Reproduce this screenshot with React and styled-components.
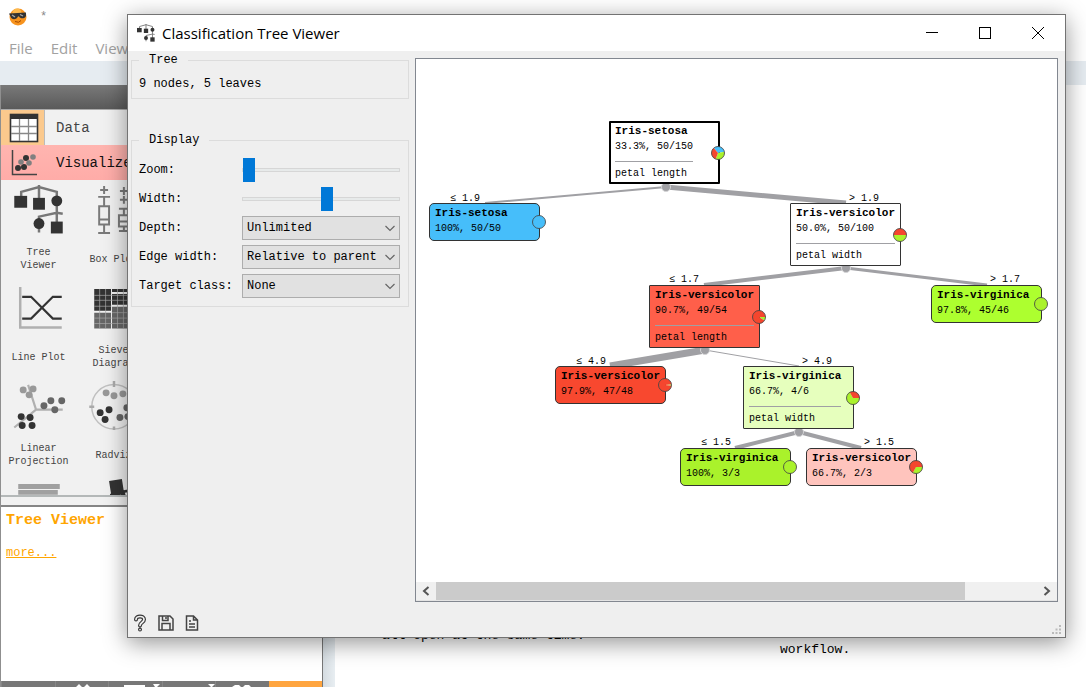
import React from 'react'
import styled, { createGlobalStyle, css } from 'styled-components'

const theme = {
  mono: '"Liberation Mono", "DejaVu Sans Mono", monospace',
  sans: '"Open Sans", "Noto Sans", sans-serif',
  panel: '#efefef',
  frame: '#828790',
  edge: '#a0a0a4',
  blue: '#46befa',
  red: '#f5462e',
  green: '#aaf22b',
}

const GlobalStyle = createGlobalStyle`
  * { box-sizing: border-box; }
  body {
    margin: 0;
    overflow: hidden;
    background: #fff;
    color: #000;
    font-family: ${theme.mono};
    font-size: 12px;
    line-height: 16px;
  }
  button {
    padding: 0;
    border: none;
    background: none;
    font: inherit;
    color: inherit;
  }
  svg { display: block; }
`

/* main window */

const Desktop = styled.div`
  position: relative;
  display: flex;
  flex-direction: column;
  height: 100vh;
  overflow: hidden;
`

const MainTitle = styled.header`
  display: flex;
  align-items: center;
  gap: 12px;
  height: 34px;
  padding-left: 8px;
  color: #888;
`

const MenuBar = styled.nav`
  display: flex;
  gap: 18px;
  height: 27px;
  padding-left: 9px;
  font-family: ${theme.sans};
  font-size: 15px;
  line-height: 28px;
  color: #a2a2a2;
`

const ToolStrip = styled.div`
  height: 24px;
  background: #e6ecf1;
`

const Workspace = styled.div`
  display: flex;
  flex: 1;
  min-height: 0;
`

const Dock = styled.aside`
  display: flex;
  flex: none;
  flex-direction: column;
  width: 323px;
  border-left: 1px solid #8f8f8f;
  border-right: 1px solid #777;
`

const DockHeader = styled.div`
  flex: none;
  height: 25px;
  background: linear-gradient(#797979, #5a5a5a);
  border-bottom: 1px solid #aaa;
`

const Category = styled.button`
  display: flex;
  flex: none;
  align-items: center;
  height: 35px;
  font-size: 14px;
  text-align: left;
  color: ${props => props.$active ? '#111' : '#444'};
  background: ${props => props.$active ? 'linear-gradient(#ffb5b0, #ffaca8)' : '#f1f1f1'};
`

const CategoryIcon = styled.span`
  display: flex;
  align-items: center;
  width: 44px;
  height: 35px;
  margin-right: 11px;
  padding-left: 8px;
  ${props => props.$selected && css`background: #fbc98d;`}
  ${props => props.$selected && css`border-right: 1px solid #bbb;`}
`

const Palette = styled.div`
  display: grid;
  flex: 1;
  grid-template-columns: 75px 75px;
  grid-auto-rows: 98px;
  min-height: 0;
  overflow: hidden;
  background: #f1f1f1;
  border-bottom: 2px solid #b4b8b8;
`

const PaletteItem = styled.button`
  display: flex;
  flex-direction: column;
  align-items: center;
  padding-top: 5px;
  font-size: 10px;
  line-height: 13px;
  color: #444;
`

const PaletteLabel = styled.span`
  display: flex;
  align-items: center;
  height: 38px;
  margin-top: 6px;
`

const Info = styled.section`
  flex: none;
  height: 184px;
  border-top: 8px solid #f1f1f1;
`

const InfoBody = styled.div`
  height: 100%;
  padding: 4px 5px 0;
  border-top: 2px solid #858585;
`

const InfoTitle = styled.h2`
  margin: 0;
  font-size: 15px;
  line-height: 20px;
  color: #ffa500;
`

const InfoLink = styled.a`
  display: inline-block;
  margin-top: 14px;
  color: #ffa500;
`

const ActionBar = styled.div`
  display: grid;
  flex: none;
  grid-template-columns: repeat(6, 1fr);
  height: 6px;
  background: #777;
`

const Action = styled.button`
  display: flex;
  justify-content: center;
  overflow: hidden;
  background: ${props => props.$active ? '#ffa53f' : '#777'};
  border-left: 1px solid ${props => props.$active ? '#ffa53f' : '#868686'};
`

const Splitter = styled.div`
  flex: none;
  width: 12px;
  background: linear-gradient(90deg, #d5dce1, #e8eef2);
`

const Document = styled.main`
  display: flex;
  flex: 1;
  align-items: flex-end;
  min-width: 0;
  padding-left: 47px;
  font-size: 13px;
  line-height: 18px;
`

const Paragraph = styled.p`
  flex: none;
  width: 398px;
  margin: 0;
  padding-bottom: ${props => props.$bottom}px;

  &:last-child { width: auto; }
`

/* dialog */

const Dialog = styled.div`
  position: absolute;
  top: 14px;
  right: 20px;
  bottom: 49px;
  left: 127px;
  display: flex;
  flex-direction: column;
  background: ${theme.panel};
  border: 1px solid #737373;
  box-shadow: 0 5px 22px rgba(0, 0, 0, 0.42);
`

const TitleBar = styled.header`
  display: flex;
  flex: none;
  align-items: center;
  height: 36px;
  padding: 0 1px 0 9px;
  background: #fff;
`

const DialogTitle = styled.h1`
  flex: 1;
  margin: 0 0 0 7px;
  font-family: ${theme.sans};
  font-size: 15px;
  font-weight: 400;
  line-height: 20px;
`

const WindowButton = styled.button`
  display: flex;
  align-items: center;
  justify-content: center;
  width: 53px;
  height: 36px;
`

const DialogBody = styled.div`
  display: flex;
  flex: 1;
  min-height: 0;
`

const Controls = styled.div`
  display: flex;
  flex: none;
  flex-direction: column;
  gap: 33px;
  width: 281px;
  padding: 1px 0 0 3px;
`

const Group = styled.fieldset`
  min-width: 0;
  margin: 0;
  padding: 8px 8px 6px 7px;
  border: 1px solid #dcdcdc;
`

const Legend = styled.legend`
  padding: 0 10px;
`

const Form = styled.div`
  display: grid;
  grid-template-columns: 103px 1fr;
  grid-auto-rows: 24px;
  row-gap: 5px;
  align-items: center;
  padding: 2px 0;
`

const Slider = styled.input`
  width: 100%;
  height: 24px;
  margin: 0;
  appearance: none;
  background: none;

  &::-webkit-slider-runnable-track {
    height: 4px;
    background: #e7eaea;
    border: 1px solid #d6d6d6;
  }
  &::-webkit-slider-thumb {
    appearance: none;
    width: 12px;
    height: 24px;
    margin-top: -11px;
    background: #0078d7;
  }
`

const SelectBox = styled.div`
  position: relative;

  svg {
    position: absolute;
    top: 9px;
    right: 5px;
    pointer-events: none;
  }
`

const Select = styled.select`
  width: 100%;
  height: 24px;
  padding: 0 0 0 4px;
  appearance: none;
  background: #e1e1e1;
  border: 1px solid #adadad;
  border-radius: 0;
  font: inherit;
  color: inherit;
`

const View = styled.div`
  display: flex;
  flex: 1;
  flex-direction: column;
  min-width: 0;
  margin: 7px 7px 0 6px;
  background: #fff;
  border: 1px solid ${theme.frame};
`

const Canvas = styled.div`
  position: relative;
  flex: 1;
  overflow: hidden;
`

const ScrollBar = styled.div`
  display: flex;
  height: 19px;
  background: #f0f0f0;
  border-bottom: 1px solid #e4e4e4;
`

const ScrollButton = styled.button`
  display: flex;
  align-items: center;
  justify-content: center;
  width: 20px;
`

const ScrollTrack = styled.div`
  flex: 1;
`

const ScrollThumb = styled.div`
  width: 88%;
  height: 18px;
  background: #cbcbcb;
`

const Footer = styled.footer`
  display: flex;
  flex: none;
  gap: 8px;
  align-items: center;
  height: 35px;
  padding: 6px 3px 0;
`

const IconButton = styled.button`
  display: flex;
  align-items: center;
  justify-content: center;
  width: 18px;
  height: 18px;
`

const Grip = styled.svg`
  align-self: flex-end;
  margin: 0 0 2px auto;
`

/* tree */

const NodeBox = styled.div`
  position: absolute;
  width: 111px;
  height: ${props => props.$leaf ? 38 : 63}px;
  padding: ${props => props.$root ? 1 : 2}px ${props => props.$root ? 4 : 5}px;
  background: ${props => props.$fill};
  border: ${props => props.$root ? '2px solid #000' : '1px solid #333'};
  border-radius: ${props => props.$leaf ? 5 : 1}px;
  font-size: 10px;
  line-height: 15px;
  white-space: nowrap;
`

const NodeText = styled.div`
  width: max-content;
`

const NodeTitle = styled.strong`
  display: block;
  font-size: 11px;
  line-height: 15px;
`

const NodeSplit = styled.div`
  margin-top: 7px;
  padding-top: 4px;
  border-top: 1px solid ${theme.edge};
  line-height: 16px;
`

const PieSvg = styled.svg`
  position: absolute;
  top: 50%;
  right: -8px;
  margin-top: -8px;
`

const EdgeLayer = styled.svg`
  position: absolute;
  top: 0;
  left: 0;
`

const EdgeLabel = styled.span`
  position: absolute;
  font-size: 10px;
  line-height: 12px;
  white-space: pre;
`

const nodes = [
  { x: 193, y: 62, name: 'Iris-setosa', stats: '33.3%, 50/150', split: 'petal length', fill: '#fff', root: true, pie: [[theme.blue, 1], [theme.green, 1], [theme.red, 1]], start: -40 },
  { x: 13, y: 144, name: 'Iris-setosa', stats: '100%, 50/50', fill: theme.blue, pie: [[theme.blue, 1]] },
  { x: 374, y: 144, name: 'Iris-versicolor', stats: '50.0%, 50/100', split: 'petal width', fill: '#fff', pie: [[theme.green, 1], [theme.red, 1]], start: 90 },
  { x: 233, y: 226, name: 'Iris-versicolor', stats: '90.7%, 49/54', split: 'petal length', fill: '#ff5f4a', pie: [[theme.green, 5], [theme.red, 49]], start: 90 },
  { x: 515, y: 226, name: 'Iris-virginica', stats: '97.8%, 45/46', fill: '#adff2f', pie: [[theme.green, 1]] },
  { x: 139, y: 307, name: 'Iris-versicolor', stats: '97.9%, 47/48', fill: '#f8482f', pie: [[theme.green, 1], [theme.red, 30]], start: 84 },
  { x: 327, y: 307, name: 'Iris-virginica', stats: '66.7%, 4/6', split: 'petal width', fill: '#e6ffbd', pie: [[theme.green, 2], [theme.red, 1]], start: 90 },
  { x: 264, y: 389, name: 'Iris-virginica', stats: '100%, 3/3', fill: theme.green, pie: [[theme.green, 1]] },
  { x: 390, y: 389, name: 'Iris-versicolor', stats: '66.7%, 2/3', fill: '#ffc4bd', pie: [[theme.green, 1], [theme.red, 2]], start: 90 },
]

const edges = [
  { from: [250, 128], to: [69, 144], width: 2 },
  { from: [250, 128], to: [430, 144], width: 5 },
  { from: [430, 209], to: [288, 226], width: 4 },
  { from: [430, 209], to: [571, 226], width: 3 },
  { from: [289, 291], to: [194, 307], width: 7 },
  { from: [289, 291], to: [383, 307], width: 1 },
  { from: [383, 373], to: [319, 389], width: 4 },
  { from: [383, 373], to: [445, 389], width: 4 },
]

const edgeLabels = [
  { x: 34, y: 134, text: '≤ 1.9' },
  { x: 433, y: 134, text: '> 1.9' },
  { x: 253, y: 215, text: '≤ 1.7' },
  { x: 574, y: 215, text: '> 1.7' },
  { x: 160, y: 297, text: '≤ 4.9' },
  { x: 386, y: 297, text: '> 4.9' },
  { x: 285, y: 378, text: '≤ 1.5' },
  { x: 448, y: 378, text: '> 1.5' },
]

const point = angle => {
  const rad = (angle - 90) * Math.PI / 180
  return `${8 + 6.5 * Math.cos(rad)} ${8 + 6.5 * Math.sin(rad)}`
}

function Pie({ parts, start = 0 }) {
  const total = parts.reduce((sum, part) => sum + part[1], 0)
  let angle = start
  return (
    <PieSvg width="16" height="16">
      {parts.length > 1 && parts.map(([color, value]) => {
        const sweep = value / total * 360
        const d = `M8 8L${point(angle)}A6.5 6.5 0 ${sweep > 180 ? 1 : 0} 1 ${point(angle + sweep)}Z`
        angle += sweep
        return <path key={color} d={d} fill={color} />
      })}
      <circle cx="8" cy="8" r="6.5" fill={parts.length > 1 ? 'none' : parts[0][0]} stroke="#444" strokeOpacity=".85" />
    </PieSvg>
  )
}

function TreeNode({ node }) {
  return (
    <NodeBox $leaf={!node.split} $root={node.root} $fill={node.fill} style={{ left: node.x, top: node.y }}>
      <NodeText>
        <NodeTitle>{node.name}</NodeTitle>
        {node.stats}
        {node.split && <NodeSplit>{node.split}</NodeSplit>}
      </NodeText>
      <Pie parts={node.pie} start={node.start} />
    </NodeBox>
  )
}

function Tree() {
  return (
    <Canvas>
      <EdgeLayer width="100%" height="100%">
        {edges.map(({ from, to, width }, i) => (
          <line key={i} x1={from[0]} y1={from[1]} x2={to[0]} y2={to[1]} stroke={theme.edge} strokeWidth={width} />
        ))}
        {edges.filter((edge, i) => i % 2 === 0).map(({ from }) => (
          <circle key={from[0]} cx={from[0]} cy={from[1]} r="4.5" fill={theme.edge} stroke="#d4d4d6" />
        ))}
      </EdgeLayer>
      {edgeLabels.map(label => (
        <EdgeLabel key={label.text + label.x} style={{ left: label.x, top: label.y }}>{label.text}</EdgeLabel>
      ))}
      {nodes.map((node, i) => <TreeNode key={i} node={node} />)}
    </Canvas>
  )
}

/* icons */

const Logo = () => (
  <svg width="20" height="20" viewBox="0 0 20 20">
    <circle cx="10" cy="10" r="8.5" fill="#f7931e" />
    <circle cx="9" cy="6" r="4.5" fill="#fdb94c" />
    <path d="M1 6.500L18 5.500V9c-1 3-6 3-7 .5H10C8.500 13 3.500 13 2.500 9.500Z" fill="#333" />
    <path d="M4 8l3 2M12 7.500l3 1.500" stroke="#a9a9a9" strokeWidth="1.300" />
    <path d="M7 14.500q4 2 6-1" stroke="#a34a00" fill="none" />
  </svg>
)

const TreeIcon = ({ size = 50 }) => (
  <svg width={size} height={size} viewBox="0 0 50 50">
    <path d="M7 12V7L25 2L43 7V44M25 0V15M25 48V32L43 28L49 29" fill="none" stroke="#777" strokeWidth="2.500" />
    <g fill="#333">
      <rect x="0" y="11" width="13" height="12" />
      <rect x="19" y="13" width="12" height="12" />
      <circle cx="43" cy="16" r="5.500" />
      <circle cx="25" cy="39" r="5.500" />
      <rect x="37" y="37" width="12" height="12" />
    </g>
  </svg>
)

const TableIcon = () => (
  <svg width="30" height="30" viewBox="0 0 30 30">
    <rect x="1.500" y="1.500" width="27" height="27" fill="#fff" stroke="#333" strokeWidth="1.600" />
    <rect x="1" y="1" width="28" height="5" fill="#333" />
    <path d="M10.500 6V28M19.500 6V28M2 13.500H28M2 20.500H28" stroke="#888" strokeWidth="1.300" />
  </svg>
)

const ScatterIcon = () => (
  <svg width="30" height="30" viewBox="0 0 30 30">
    <path d="M3.500 2V26.500H28" fill="none" stroke="#444" strokeWidth="1.500" />
    <g fill="#333">
      <circle cx="9" cy="20" r="3" /><circle cx="15" cy="19" r="3" /><circle cx="17" cy="10" r="3" />
    </g>
    <g fill="#808080">
      <circle cx="12" cy="14" r="2.800" /><circle cx="20" cy="15" r="2.800" /><circle cx="24" cy="9" r="2.800" />
    </g>
  </svg>
)

const BoxPlotIcon = () => (
  <svg width="50" height="50" viewBox="0 0 50 50" fill="none" stroke="#7a7a7a" strokeWidth="2">
    <path d="M15 1V9M11 5H19M9 12H21M15 12V21M10 21.500H20V40H10ZM10 35H20M15 40V48M9 48.500H21" />
    <path d="M35 2V10M31 6H39M35 11V19M31 15H39M30 24H41M35 24V30M30 30.500H41V42H30ZM30 37H41M35 42V46M30 46.500H41" />
  </svg>
)

const LinePlotIcon = () => (
  <svg width="50" height="50" viewBox="0 0 50 50" fill="none">
    <path d="M6 4V45H48" stroke="#b0b0b0" strokeWidth="2.500" />
    <path d="M8 14H17L39 36H48M8 36H17L39 14H48" stroke="#333" strokeWidth="2.200" />
  </svg>
)

const SieveIcon = () => (
  <svg width="50" height="50" viewBox="0 0 50 50">
    <path d="M5 6H22V28H5ZM23 6H48V9H23ZM23 11H48V22H23Z" fill="#333" />
    <path d="M5 30H22V46H5ZM23 24H48V46H23Z" fill="#666" />
    <path d="M10.500 6V46M16.500 6V46M28.500 6V46M34.500 6V46M40.500 6V46M5 12.500H48M5 17.500H48M5 23.500H22M5 35.500H48M5 41H48M23 30H48" stroke="#aaa" strokeWidth=".7" />
  </svg>
)

const dots = (list, r = 3.500) => list.map(([cx, cy]) => <circle key={`${cx}-${cy}`} cx={cx} cy={cy} r={r} />)

const LinearIcon = () => (
  <svg width="54" height="50" viewBox="0 0 54 50">
    <path d="M16 4L24 29H51M24 29L2 47" fill="none" stroke="#b0b0b0" strokeWidth="2.200" />
    <g fill="#999">{dots([[11, 9], [21, 8], [17, 14]])}</g>
    <g fill="#666">{dots([[32, 25], [39, 20], [50, 20], [43, 29]])}</g>
    <g fill="#333">{dots([[9, 36], [18, 37], [10, 45], [20, 45]])}</g>
  </svg>
)

const RadvizIcon = () => (
  <svg width="50" height="50" viewBox="0 0 50 50">
    <circle cx="25" cy="26" r="22.500" fill="none" stroke="#c0c0c0" strokeWidth="1.500" />
    <path d="M25 0V6M25 46V52M0 26H5M45 26H50" stroke="#aaa" strokeWidth="2.500" />
    <g fill="#999">{dots([[17, 12], [25, 15], [34, 13]])}</g>
    <g fill="#333">{dots([[11, 32], [20, 29], [16, 39]])}</g>
    <g fill="#666">{dots([[31, 37], [38, 27], [39, 36]])}</g>
  </svg>
)

const HeatMapIcon = () => (
  <svg width="50" height="50" viewBox="0 0 50 50">
    <path d="M4 5H46V10H4ZM4 11H44V16H4Z" fill="#a0a0a0" />
    <path d="M4 17H44V30H4Z" fill="#999" />
  </svg>
)

const TiltedIcon = () => (
  <svg width="50" height="50" viewBox="0 0 50 50" fill="#333">
    <path d="M20 2L33 0L35 13L22 15ZM21 15L36 11L48 9V12L36 14L38 20H34L32 16L24 17L21 20Z" />
  </svg>
)

const ChevronDown = () => (
  <svg width="10" height="7" fill="none" stroke="#666"><path d="M.5 1L5 5.500L9.500 1" strokeWidth="1.200" /></svg>
)

const HelpIcon = () => (
  <svg width="14" height="18" viewBox="0 0 14 18" fill="none" strokeLinecap="round">
    <path d="M3 5.500C3 1.500 11 1.500 11 5.500C11 8.500 7 8.500 7 11.500M7 15.500V15.600" stroke="#333" strokeWidth="4" />
    <path d="M3 5.500C3 1.500 11 1.500 11 5.500C11 8.500 7 8.500 7 11.500M7 15.500V15.600" stroke="#efefef" strokeWidth="1.700" />
  </svg>
)

const SaveIcon = () => (
  <svg width="18" height="18" viewBox="0 0 18 18" fill="none" stroke="#444" strokeWidth="1.500">
    <path d="M2 2H13L16 5V16H2ZM5 16V9.500H13V16M5.500 2V6.500H11V2M9 3V5" />
  </svg>
)

const ReportIcon = () => (
  <svg width="16" height="18" viewBox="0 0 16 18" fill="none" stroke="#444" strokeWidth="1.500">
    <path d="M2.500 2H9.500L13.500 6V16H2.500ZM9.500 2V6H13.500M5 7H7M5 10H11M5 13H11" />
  </svg>
)

const palette = [
  ['Tree\nViewer', TreeIcon],
  ['Box Plot', BoxPlotIcon],
  ['Line Plot', LinePlotIcon],
  ['Sieve\nDiagram', SieveIcon],
  ['Linear\nProjection', LinearIcon],
  ['Radviz', RadvizIcon],
  ['', HeatMapIcon],
  ['', TiltedIcon],
]

const PaletteText = styled.span`
  white-space: pre;
`

// only the tops of these glyphs show above the window edge
const actions = [null, 'M20 6L23 3L26 6M28 6L31 3L34 6', 'M15 4H36V6H15ZM44 3H51L48 6H46Z', 'M45 3H52L49 6H48Z', 'M16 6L19 4H23L25 6M27 6L29 4H33L35 6', null]

const selects = [
  { id: 'depth', label: 'Depth:', value: 'Unlimited' },
  { id: 'edge', label: 'Edge width:', value: 'Relative to parent' },
  { id: 'target', label: 'Target class:', value: 'None' },
]

function MainWindow() {
  return (
    <>
      <MainTitle><Logo /><span>*</span></MainTitle>
      <MenuBar><span>File</span><span>Edit</span><span>View</span></MenuBar>
      <ToolStrip />
      <Workspace>
        <Dock>
          <DockHeader />
          <Category><CategoryIcon $selected><TableIcon /></CategoryIcon>Data</Category>
          <Category $active><CategoryIcon><ScatterIcon /></CategoryIcon>Visualize</Category>
          <Palette>
            {palette.map(([label, Icon], i) => (
              <PaletteItem key={i}>
                <Icon />
                <PaletteLabel><PaletteText>{label}</PaletteText></PaletteLabel>
              </PaletteItem>
            ))}
          </Palette>
          <Info>
            <InfoBody>
              <InfoTitle>Tree Viewer</InfoTitle>
              <InfoLink href="#more">more...</InfoLink>
            </InfoBody>
          </Info>
          <ActionBar>
            {actions.map((d, i) => (
              <Action key={i} $active={i === 5}>
                {d && <svg width="54" height="6" fill="#fff"><path d={d} /></svg>}
              </Action>
            ))}
          </ActionBar>
        </Dock>
        <Splitter />
        <Document>
          <Paragraph $bottom={42}>all open at the same time.</Paragraph>
          <Paragraph $bottom={28}>workflow.</Paragraph>
        </Document>
      </Workspace>
    </>
  )
}

export default function App() {
  return (
    <Desktop>
      <GlobalStyle />
      <MainWindow />
      <Dialog role="dialog" aria-labelledby="dialog-title">
        <TitleBar>
          <TreeIcon size={18} />
          <DialogTitle id="dialog-title">Classification Tree Viewer</DialogTitle>
          <WindowButton aria-label="Minimize">
            <svg width="12" height="12"><path d="M0 5.500H12" stroke="#000" /></svg>
          </WindowButton>
          <WindowButton aria-label="Maximize">
            <svg width="12" height="12"><rect x=".5" y=".5" width="11" height="11" fill="none" stroke="#000" /></svg>
          </WindowButton>
          <WindowButton aria-label="Close">
            <svg width="12" height="12"><path d="M0 0L12 12M12 0L0 12" stroke="#000" /></svg>
          </WindowButton>
        </TitleBar>
        <DialogBody>
          <Controls>
            <Group>
              <Legend>Tree</Legend>
              9 nodes, 5 leaves
            </Group>
            <Group>
              <Legend>Display</Legend>
              <Form>
                <label htmlFor="zoom">Zoom:</label>
                <Slider id="zoom" type="range" defaultValue="0" />
                <label htmlFor="width">Width:</label>
                <Slider id="width" type="range" defaultValue="54" />
                {selects.map(({ id, label, value }) => (
                  <React.Fragment key={id}>
                    <label htmlFor={id}>{label}</label>
                    <SelectBox>
                      <Select id={id}><option>{value}</option></Select>
                      <ChevronDown />
                    </SelectBox>
                  </React.Fragment>
                ))}
              </Form>
            </Group>
          </Controls>
          <View>
            <Tree />
            <ScrollBar>
              <ScrollButton aria-label="Scroll left">
                <svg width="8" height="10" fill="none" stroke="#555" strokeWidth="2"><path d="M6.500 1L2 5L6.500 9" /></svg>
              </ScrollButton>
              <ScrollTrack><ScrollThumb /></ScrollTrack>
              <ScrollButton aria-label="Scroll right">
                <svg width="8" height="10" fill="none" stroke="#555" strokeWidth="2"><path d="M1.500 1L6 5L1.500 9" /></svg>
              </ScrollButton>
            </ScrollBar>
          </View>
        </DialogBody>
        <Footer>
          <IconButton aria-label="Help"><HelpIcon /></IconButton>
          <IconButton aria-label="Save"><SaveIcon /></IconButton>
          <IconButton aria-label="Report"><ReportIcon /></IconButton>
          <Grip width="10" height="10" fill="#bbb">
            <path d="M7 0h2v2h-2zM3.500 3.500h2v2h-2zM7 3.500h2v2h-2zM0 7h2v2h-2zM3.500 7h2v2h-2zM7 7h2v2h-2z" />
          </Grip>
        </Footer>
      </Dialog>
    </Desktop>
  )
}
